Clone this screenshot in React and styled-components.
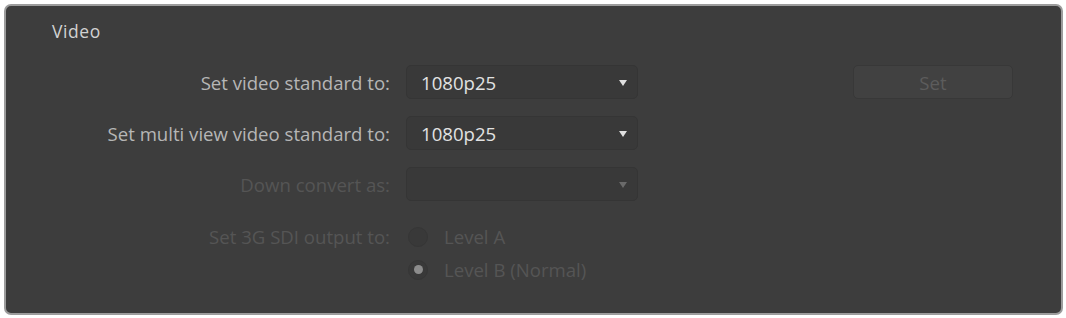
import React from "react";
import styled, { createGlobalStyle } from "styled-components";

const Global = createGlobalStyle`
  html, body {
    margin: 0;
    padding: 0;
    background: #ffffff;
  }
  body {
    font-family: "Open Sans", "Noto Sans", sans-serif;
  }
`;

const Page = styled.div`
  width: 1066px;
  height: 318px;
  padding: 4px 3px 3px 4px;
  box-sizing: border-box;
`;

const Panel = styled.div`
  height: 100%;
  box-sizing: border-box;
  border: 2px solid #9c9c9c;
  border-radius: 7px;
  background: #3d3d3d;
  padding: 15px 48px 0 0;
  display: flex;
  flex-direction: column;
`;

const Title = styled.div`
  padding-left: 46px;
  height: 20px;
  line-height: 20px;
  font-size: 17.5px;
  letter-spacing: 0.6px;
  color: #d2d2d2;
  margin-bottom: 24px;
`;

const Row = styled.div`
  display: grid;
  grid-template-columns: 384px 232px 1fr;
  column-gap: 16px;
  align-items: center;
  height: ${({ $h }) => $h || 34}px;
  margin-bottom: ${({ $mb }) => $mb || 0}px;
`;

const Label = styled.div`
  text-align: right;
  font-size: 18.6px;
  color: ${({ $off }) => ($off ? "#555555" : "#b6b6b6")};
  white-space: nowrap;
`;

const Select = styled.div`
  height: 34px;
  box-sizing: border-box;
  border: 1px solid #353535;
  border-radius: 5px;
  background: #393939;
  display: flex;
  align-items: center;
  justify-content: space-between;
  padding: 0 10px 0 14px;
  font-size: 18.6px;
  color: #e2e2e2;
`;

const Arrow = styled.span`
  width: 0;
  height: 0;
  border-left: 4.5px solid transparent;
  border-right: 4.5px solid transparent;
  border-top: 6px solid ${({ $off }) => ($off ? "#6a6a6a" : "#e0e0e0")};
  margin-top: 2px;
`;

const SetButton = styled.div`
  justify-self: end;
  width: 160px;
  height: 34px;
  box-sizing: border-box;
  border: 1px solid #383838;
  border-radius: 5px;
  background: #414141;
  display: flex;
  align-items: center;
  justify-content: center;
  font-size: 18.6px;
  color: #5c5c5c;
`;

const RadioOption = styled.div`
  display: flex;
  align-items: center;
  gap: 16px;
  padding-left: 2px;
  font-size: 18.6px;
  color: #555555;
`;

const Circle = styled.span`
  width: 20px;
  height: 20px;
  box-sizing: border-box;
  border-radius: 50%;
  background: #393939;
  border: 1px solid #363636;
  display: flex;
  align-items: center;
  justify-content: center;
  &::after {
    content: "";
    width: 9px;
    height: 9px;
    border-radius: 50%;
    background: ${({ $on }) => ($on ? "#8c8c8c" : "transparent")};
  }
`;

export default function App() {
  return (
    <>
      <Global />
      <Page>
        <Panel>
          <Title>Video</Title>
          <Row $mb={17}>
            <Label>Set video standard to:</Label>
            <Select>
              1080p25
              <Arrow />
            </Select>
            <SetButton>Set</SetButton>
          </Row>
          <Row $mb={17}>
            <Label>Set multi view video standard to:</Label>
            <Select>
              1080p25
              <Arrow />
            </Select>
          </Row>
          <Row $mb={23}>
            <Label $off>Down convert as:</Label>
            <Select>
              <span />
              <Arrow $off />
            </Select>
          </Row>
          <Row $h={24} $mb={9}>
            <Label $off>Set 3G SDI output to:</Label>
            <RadioOption>
              <Circle />
              Level A
            </RadioOption>
          </Row>
          <Row $h={24}>
            <span />
            <RadioOption>
              <Circle $on />
              Level B (Normal)
            </RadioOption>
          </Row>
        </Panel>
      </Page>
    </>
  );
}
